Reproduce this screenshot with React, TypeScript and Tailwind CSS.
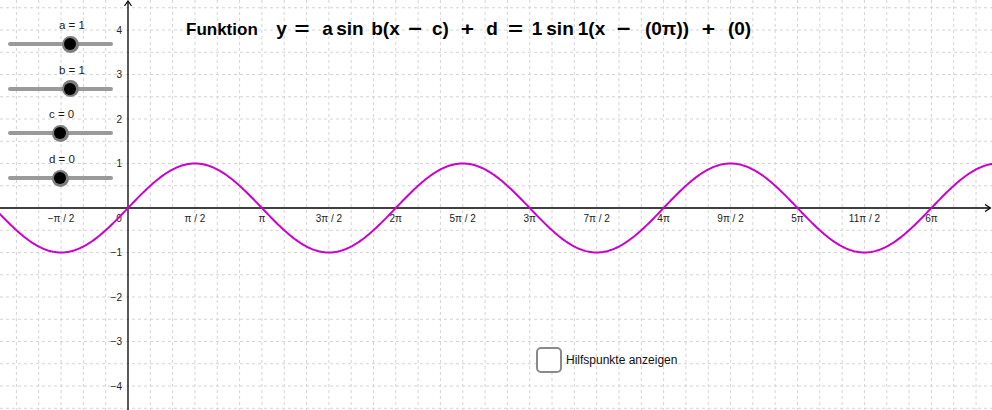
import React from "react";

const W = 992;
const H = 410;
const OX = 128;
const OY = 208;
const PI_PX = 133.9;
const UY = 44.5;
const GX = PI_PX / 6;
const GY = UY / 2;

function curvePath() {
  let d = "";
  for (let px = -2; px <= W + 2; px += 1) {
    const x = ((px - OX) / PI_PX) * Math.PI;
    const y = OY - UY * Math.sin(x);
    d += (px === -2 ? "M" : "L") + px + " " + y.toFixed(2) + " ";
  }
  return d;
}

function xLabel(k: number) {
  if (k % 2 === 0) {
    const n = k / 2;
    return n === 1 ? "π" : `${n}π`;
  }
  if (k === -1) return "−π / 2";
  if (k === 1) return "π / 2";
  return `${k}π / 2`;
}

const sliders = [
  { name: "a", value: "1", knob: 62 },
  { name: "b", value: "1", knob: 62 },
  { name: "c", value: "0", knob: 52 },
  { name: "d", value: "0", knob: 52 },
];

const font = '"Liberation Sans", Arial, sans-serif';

function Slider({ name, value, knob }: { name: string; value: string; knob: number }) {
  return (
    <div className="flex flex-col w-[105px]">
      <div className="relative h-[14px]">
        <span
          className="absolute top-0 whitespace-pre text-[11.5px] leading-[14px] text-[#1a1a1a]"
          style={{ left: knob - 11, fontFamily: font }}
        >
          {name} = {value}
        </span>
      </div>
      <div className="relative h-[16px] mt-[4px] flex items-center">
        <div className="h-[4px] w-full rounded-full bg-[#9a9a9a]" />
        <div
          className="absolute top-[-0.5px] w-[17px] h-[17px] rounded-full bg-[#7d7d7d] flex items-center justify-center"
          style={{ left: knob - 8.5 }}
        >
          <div className="w-[12px] h-[12px] rounded-full bg-black" />
        </div>
      </div>
    </div>
  );
}

function Tok({ children, className }: { children: React.ReactNode; className: string }) {
  return <span className={"whitespace-pre shrink-0 flex justify-center " + className}>{children}</span>;
}

export default function App() {
  const vLines: number[] = [];
  for (let k = -6; k <= 40; k++) {
    const x = OX + k * GX;
    if (x >= 0 && x <= W && k !== 0) vLines.push(x);
  }
  const hLines: number[] = [];
  for (let k = -10; k <= 10; k++) {
    const y = OY + k * GY;
    if (y >= 0 && y <= H && k !== 0) hLines.push(y);
  }
  const xl: number[] = [];
  for (let k = -1; k <= 12; k++) if (k !== 0) xl.push(k);
  const yl = [4, 3, 2, 1, -1, -2, -3, -4];

  return (
    <div className="relative w-[992px] h-[410px] overflow-hidden bg-white">
      <svg className="absolute inset-0" width={W} height={H} viewBox={`0 0 ${W} ${H}`}>
        {vLines.map((x, i) => (
          <line key={"v" + i} x1={x} y1={0} x2={x} y2={H} stroke="#d4d4d4" strokeWidth={1} strokeDasharray="3 3" />
        ))}
        {hLines.map((y, i) => (
          <line key={"h" + i} x1={0} y1={y} x2={W} y2={y} stroke="#d4d4d4" strokeWidth={1} strokeDasharray="3 3" />
        ))}
        <line x1={0} y1={OY} x2={990} y2={OY} stroke="#000" strokeWidth={1.3} />
        <polyline points="985,204.5 990.5,208 985,211.5" fill="none" stroke="#000" strokeWidth={1.2} />
        <line x1={OX} y1={H} x2={OX} y2={1.5} stroke="#000" strokeWidth={1.3} />
        <polyline points="124.5,6 128,1 131.5,6" fill="none" stroke="#000" strokeWidth={1.2} />
        <g fontFamily={font} fontSize={10} fill="#222">
          {xl.map((k) => (
            <text key={"xl" + k} x={OX + (k * PI_PX) / 2} y={222} textAnchor="middle">
              {xLabel(k)}
            </text>
          ))}
          <text x={119} y={222} textAnchor="middle">0</text>
          {yl.map((n) => (
            <text key={"yl" + n} x={122} y={OY - n * UY + 3.5} textAnchor="end">
              {n < 0 ? `−${-n}` : `${n}`}
            </text>
          ))}
        </g>
        <path d={curvePath()} fill="none" stroke="#cc00cc" strokeWidth={2} />
      </svg>

      <div className="absolute left-[8px] top-[18px] flex flex-col gap-[10.7px]">
        {sliders.map((s) => (
          <Slider key={s.name} {...s} />
        ))}
      </div>

      <div
        className="absolute left-[186px] top-[17px] flex items-baseline font-bold text-[19px] leading-[24px] text-black"
        style={{ fontFamily: font }}
      >
        <span className="whitespace-pre shrink-0 text-[17px] w-[73px]">Funktion</span>
        <Tok className="ml-[17px] w-[11px]">y</Tok>
        <Tok className="ml-[8px] w-[14px] scale-x-[1.35]">=</Tok>
        <Tok className="ml-[14px] w-[9px]">a</Tok>
        <Tok className="ml-[4px] w-[28px]">sin</Tok>
        <Tok className="ml-[6px] w-[31px]">b(x</Tok>
        <Tok className="ml-[8px] w-[12px] scale-x-[1.25]">−</Tok>
        <Tok className="ml-[12px] w-[15px]">c)</Tok>
        <Tok className="ml-[13px] w-[13px] scale-x-[1.2]">+</Tok>
        <Tok className="ml-[12px] w-[12px]">d</Tok>
        <Tok className="ml-[10px] w-[15px] scale-x-[1.35]">=</Tok>
        <Tok className="ml-[10px] w-[8px]">1</Tok>
        <Tok className="ml-[6px] w-[26px]">sin</Tok>
        <Tok className="ml-[4px] w-[29px]">1(x</Tok>
        <Tok className="ml-[11px] w-[13px] scale-x-[1.25]">−</Tok>
        <Tok className="ml-[14px] w-[46px]">(0π))</Tok>
        <Tok className="ml-[12px] w-[13px] scale-x-[1.2]">+</Tok>
        <Tok className="ml-[12px] w-[25px]">(0)</Tok>
      </div>

      <div className="absolute left-[536px] top-[347px] flex items-center gap-[4px]">
        <div className="w-[26px] h-[26px] rounded-[5px] border-2 border-[#8a8a8a] bg-white" />
        <span className="text-[12px] text-[#111]" style={{ fontFamily: font }}>
          Hilfspunkte anzeigen
        </span>
      </div>
    </div>
  );
}
